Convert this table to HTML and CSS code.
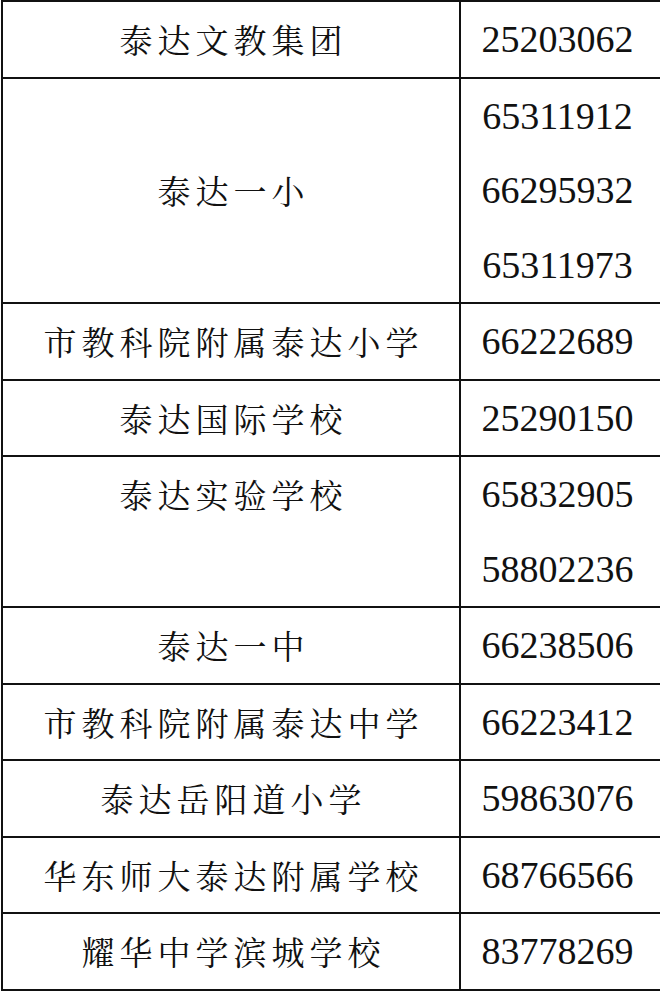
FILE: index.html
```html
<!DOCTYPE html>
<html>
<head>
<meta charset="utf-8">
<link rel="stylesheet" href="styles.css">
</head>
<body>
<div class="contacts">
  <div class="row"><div class="name">泰达文教集团</div><div class="phone"><div class="num">25203062</div></div></div>
  <div class="row"><div class="name">泰达一小</div><div class="phone"><div class="num">65311912</div><div class="num">66295932</div><div class="num">65311973</div></div></div>
  <div class="row"><div class="name">市教科院附属泰达小学</div><div class="phone"><div class="num">66222689</div></div></div>
  <div class="row"><div class="name">泰达国际学校</div><div class="phone"><div class="num">25290150</div></div></div>
  <div class="row"><div class="name top">泰达实验学校</div><div class="phone"><div class="num">65832905</div><div class="num">58802236</div></div></div>
  <div class="row"><div class="name">泰达一中</div><div class="phone"><div class="num">66238506</div></div></div>
  <div class="row"><div class="name">市教科院附属泰达中学</div><div class="phone"><div class="num">66223412</div></div></div>
  <div class="row"><div class="name">泰达岳阳道小学</div><div class="phone"><div class="num">59863076</div></div></div>
  <div class="row"><div class="name">华东师大泰达附属学校</div><div class="phone"><div class="num">68766566</div></div></div>
  <div class="row"><div class="name">耀华中学滨城学校</div><div class="phone"><div class="num">83778269</div></div></div>
</div>
</body>
</html>
```
FILE: styles.css
```css
html, body {
  margin: 0;
  padding: 0;
  background: #fff;
}
body {
  width: 660px;
  height: 991px;
  overflow: hidden;
}
.contacts {
  margin-left: 1px;
  border-top: 2px solid #111;
  border-left: 2px solid #111;
  color: #111;
}
.row {
  display: grid;
  grid-template-columns: 458px 1fr;
  border-bottom: 2px solid #111;
}
.name {
  border-right: 2px solid #111;
  display: flex;
  align-items: center;
  justify-content: center;
  font-family: "Noto Serif CJK SC";
  font-size: 33px;
  letter-spacing: 5px;
  padding-left: 5px;
  line-height: 74.5px;
}
.top {
  align-items: flex-start;
}
.num {
  height: 74.5px;
  line-height: 74.5px;
  text-align: center;
  padding-right: 6px;
  font-family: "Liberation Serif";
  font-size: 38px;
}
```
